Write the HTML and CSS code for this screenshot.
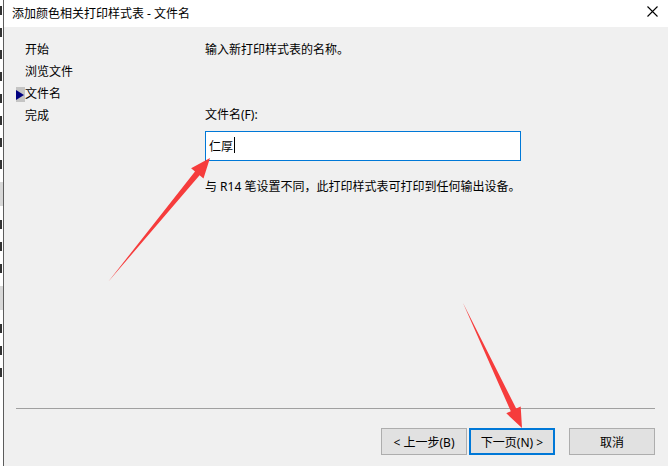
FILE: index.html
```html
<!DOCTYPE html>
<html lang="zh-CN">
<head>
  <meta charset="UTF-8" />
  <title>添加颜色相关打印样式表 - 文件名</title>
  <link rel="stylesheet" href="styles.css">
</head>
<body>
  <div class="screen">
    <!-- edge of the window behind the dialog -->
    <div class="behind">
      <i class="bit"></i><i class="bit"></i><i class="bit"></i><i class="bit"></i>
      <i class="bit"></i><i class="bit"></i><i class="bit"></i><i class="bit"></i>
      <i class="band"></i>
      <i class="bit"></i><i class="bit"></i><i class="bit"></i>
      <i class="band"></i>
      <i class="bit"></i><i class="bit"></i><i class="bit"></i>
    </div>
    <div class="dialog">
      <div class="titlebar">
        <span class="title">添加颜色相关打印样式表 - 文件名</span>
        <svg class="close" width="11" height="11" viewBox="0 0 11 11">
          <path d="M0.5 0.5 L10.5 10.5 M10.5 0.5 L0.5 10.5" stroke="#000" stroke-width="1.1" fill="none"/>
        </svg>
      </div>
      <div class="body">
        <div class="main">
          <ul class="steps">
            <li>开始</li>
            <li>浏览文件</li>
            <li class="current"><span class="marker"></span>文件名</li>
            <li>完成</li>
          </ul>
          <div class="page">
            <p class="intro">输入新打印样式表的名称。</p>
            <label class="field-label">文件名(F):</label>
            <div class="input">仁厚<span class="caret"></span></div>
            <p class="note">与 R14 笔设置不同，此打印样式表可打印到任何输出设备。</p>
          </div>
        </div>
        <div class="sep"></div>
        <div class="buttons">
          <button class="btn">&lt; 上一步(B)</button>
          <button class="btn default">下一页(N) &gt;</button>
          <button class="btn cancel">取消</button>
        </div>
      </div>
    </div>

    <!-- red annotation arrows -->
    <svg class="annot" width="668" height="466" viewBox="0 0 668 466">
      <polygon fill="#f63c3c" points="108,282 199.6,175.3 203.5,178.5 210,158 191.1,168.3 195,171.5"/>
      <polygon fill="#f63c3c" points="463,303 510.8,411.2 506.3,413.3 522,428 520.7,406.5 516.2,408.6"/>
    </svg>
  </div>
</body>
</html>
```

FILE: styles.css
```css
* {
  box-sizing: border-box;
}
body {
  margin: 0;
  font-family: "Noto Sans", "Noto Sans CJK SC", sans-serif;
  font-size: 12px;
  color: #000;
  background: #fff;
}
.screen {
  position: relative;
  display: flex;
  width: 668px;
  height: 466px;
  overflow: hidden;
}
.behind {
  width: 4px;
  flex-shrink: 0;
  overflow: hidden;
  background: #fff;
  border-right: 1px solid #5c5c5c;
  padding-top: 6px;
}
.bit {
  display: block;
  width: 2px;
  height: 9px;
  background: #333;
  margin-bottom: 13px;
}
.band {
  display: block;
  height: 24px;
  background: #d8d8d8;
  margin-bottom: 14px;
}
.dialog {
  flex: 1;
  display: flex;
  flex-direction: column;
}
.titlebar {
  height: 27px;
  flex-shrink: 0;
  background: #fff;
  display: flex;
  align-items: center;
  padding-left: 8px;
  padding-right: 10px;
}
.title {
  line-height: 16px;
}
.close {
  margin-left: auto;
  margin-top: -5px;
}
.body {
  flex: 1;
  background: #f0f0f0;
  display: flex;
  flex-direction: column;
  padding: 12px 13px 11px 12px;
}
.main {
  flex: 1;
  display: flex;
}
.steps {
  list-style: none;
  margin: 0;
  padding: 0;
  width: 189px;
  flex-shrink: 0;
}
.steps li {
  line-height: 22px;
  height: 22px;
  padding-left: 9px;
}
.steps li.current {
  padding-left: 0;
  display: flex;
  align-items: center;
}
.marker {
  width: 9px;
  height: 15px;
  background: #c4c4c4;
  padding-top: 3px;
  margin-top: 1px;
}
.marker::after {
  content: "";
  display: block;
  width: 0;
  height: 0;
  border-left: 8px solid #000080;
  border-top: 5px solid transparent;
  border-bottom: 5px solid transparent;
}
.page {
  flex: 1;
}
.intro {
  margin: 0;
  line-height: 22px;
}
.field-label {
  display: block;
  margin-top: 43px;
  line-height: 22px;
}
.input {
  margin-top: 5px;
  width: 316px;
  height: 30px;
  background: #fff;
  border: 1px solid #0078d7;
  padding-left: 3px;
  display: flex;
  align-items: center;
}
.caret {
  display: inline-block;
  width: 0;
  height: 16px;
  border-left: 1px solid #000;
  margin-left: 1px;
  margin-top: -2px;
}
.note {
  margin: 15px 0 0;
  line-height: 22px;
}
.sep {
  height: 1px;
  background: #a0a0a0;
  margin-bottom: 19px;
  flex-shrink: 0;
}
.buttons {
  display: flex;
  justify-content: flex-end;
  gap: 2px;
}
.btn {
  width: 86px;
  height: 27px;
  background: #e1e1e1;
  border: 1px solid #adadad;
  font-family: inherit;
  font-size: 12px;
  color: #000;
  padding: 0;
}
.btn.default {
  border: 2px solid #0078d7;
}
.btn.cancel {
  margin-left: 12px;
}
.annot {
  position: absolute;
  top: 0;
  left: 0;
  pointer-events: none;
}
```
